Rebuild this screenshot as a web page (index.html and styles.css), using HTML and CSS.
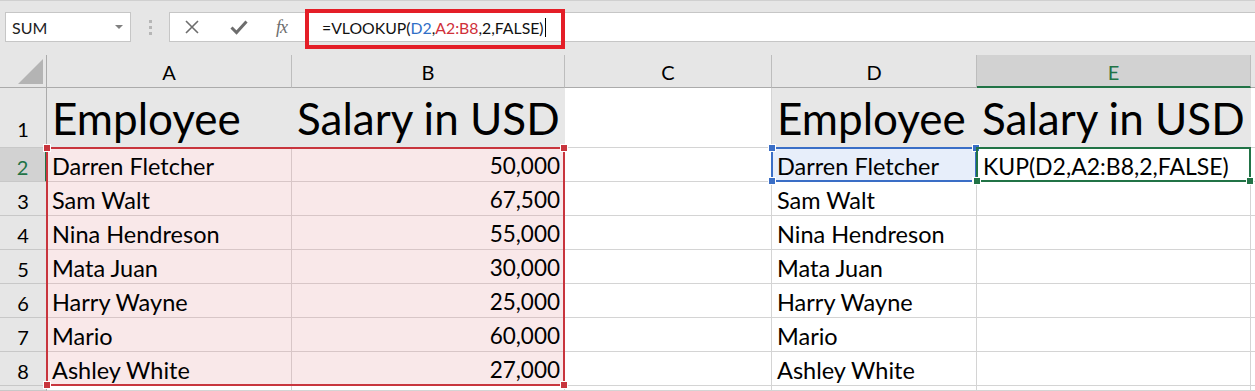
FILE: index.html
```html
<!DOCTYPE html>
<html>
<head>
<meta charset="utf-8">
<link rel="stylesheet" href="styles.css">
</head>
<body>
<div class="app">
  <div class="topstrip"></div>
  <div class="fbar">
    <div class="namebox"><span class="nb-text">SUM</span><span class="caret"></span></div>
    <div class="grip"><i></i><i></i><i></i></div>
    <div class="formula">
      <div class="fbtns">
        <svg class="ico" width="16" height="16" viewBox="0 0 16 16"><path d="M2 2 L14 14 M14 2 L2 14" stroke="#6d6d6d" stroke-width="1.6" fill="none"/></svg>
        <svg class="ico" width="18" height="16" viewBox="0 0 18 16"><path d="M1.5 8.5 L6.5 13.5 L16.5 2.5" stroke="#6d6d6d" stroke-width="3" fill="none" stroke-linejoin="miter"/></svg>
        <span class="fx">fx</span>
      </div>
      <div class="ftext">=VLOOKUP(<span class="rb">D2</span>,<span class="rr">A2:B8</span>,2,FALSE)<span class="cursor"></span></div>
    </div>
    <div class="annot"></div>
  </div>
  <div class="gap"></div>
  <div class="sheet">
    <div class="corner"><span class="tri"></span></div>
    <div class="ch">A</div>
    <div class="ch">B</div>
    <div class="ch">C</div>
    <div class="ch">D</div>
    <div class="ch ch-act">E</div>
    <div class="ch ch-last"></div>

    <div class="rh rh-big">1</div>
    <div class="c big fill">Employee</div>
    <div class="c big fill">Salary in USD</div>
    <div class="c big"></div>
    <div class="c big fill">Employee</div>
    <div class="c big fill">Salary in USD</div>
    <div class="c"></div>

    <div class="rh rh-act">2</div>
    <div class="c sel">Darren Fletcher</div>
    <div class="c sel num">50,000</div>
    <div class="c"></div>
    <div class="c blue">Darren Fletcher</div>
    <div class="c edit">KUP(D2,A2:B8,2,FALSE)</div>
    <div class="c"></div>

    <div class="rh">3</div>
    <div class="c sel">Sam Walt</div>
    <div class="c sel num">67,500</div>
    <div class="c"></div>
    <div class="c">Sam Walt</div>
    <div class="c"></div>
    <div class="c"></div>

    <div class="rh">4</div>
    <div class="c sel">Nina Hendreson</div>
    <div class="c sel num">55,000</div>
    <div class="c"></div>
    <div class="c">Nina Hendreson</div>
    <div class="c"></div>
    <div class="c"></div>

    <div class="rh">5</div>
    <div class="c sel">Mata Juan</div>
    <div class="c sel num">30,000</div>
    <div class="c"></div>
    <div class="c">Mata Juan</div>
    <div class="c"></div>
    <div class="c"></div>

    <div class="rh">6</div>
    <div class="c sel">Harry Wayne</div>
    <div class="c sel num">25,000</div>
    <div class="c"></div>
    <div class="c">Harry Wayne</div>
    <div class="c"></div>
    <div class="c"></div>

    <div class="rh">7</div>
    <div class="c sel">Mario</div>
    <div class="c sel num">60,000</div>
    <div class="c"></div>
    <div class="c">Mario</div>
    <div class="c"></div>
    <div class="c"></div>

    <div class="rh">8</div>
    <div class="c sel">Ashley White</div>
    <div class="c sel num">27,000</div>
    <div class="c"></div>
    <div class="c">Ashley White</div>
    <div class="c"></div>
    <div class="c"></div>

    <div class="rh"></div>
    <div class="c"></div>
    <div class="c"></div>
    <div class="c"></div>
    <div class="c"></div>
    <div class="c"></div>
    <div class="c"></div>

    <div class="overlay">
      <div class="range-red"><i class="h tl"></i><i class="h tr"></i><i class="h bl"></i><i class="h br"></i></div>
      <div class="range-blue"><i class="h tl"></i><i class="h tr"></i><i class="h bl"></i><i class="h br"></i></div>
      <div class="range-green"><i class="h bl"></i><i class="h br"></i></div>
    </div>
  </div>
</div>
</body>
</html>
```

FILE: styles.css
```css
html, body {
  margin: 0;
  padding: 0;
  background: #e6e6e6;
}
.app {
  width: 1255px;
  height: 391px;
  overflow: hidden;
  background: #e6e6e6;
  font-family: Lato, "Liberation Sans", sans-serif;
}
.topstrip {
  height: 12px;
  border-top: 1px solid #d0d0d0;
  box-sizing: border-box;
}
.fbar {
  position: relative;
  display: flex;
  height: 30px;
  box-sizing: border-box;
}
.namebox {
  margin-left: 5px;
  width: 126px;
  box-sizing: border-box;
  background: #fff;
  border: 1px solid #c6c6c6;
  display: flex;
  align-items: center;
  justify-content: space-between;
  padding: 0 7px 0 6px;
}
.nb-text {
  font-size: 16px;
  color: #222;
}
.caret {
  width: 0;
  height: 0;
  border-left: 4px solid transparent;
  border-right: 4px solid transparent;
  border-top: 4px solid #808080;
}
.grip {
  width: 38px;
  display: flex;
  flex-direction: column;
  align-items: center;
  justify-content: center;
  gap: 3px;
}
.grip i {
  display: block;
  width: 3px;
  height: 3px;
  background: #b6b6b6;
}
.formula {
  flex: 1;
  display: flex;
  align-items: center;
  background: #fff;
  border: 1px solid #c6c6c6;
  border-right: none;
}
.fbtns {
  display: flex;
  align-items: center;
  padding-left: 14px;
  width: 139px;
  box-sizing: border-box;
}
.ico {
  display: block;
}
.fbtns .ico:first-child {
  margin-right: 30px;
}
.fbtns .ico:nth-child(2) {
  margin-right: 28px;
}
.fx {
  font-family: "Liberation Serif", serif;
  font-style: italic;
  font-size: 18px;
  color: #6d6d6d;
  letter-spacing: -1px;
}
.ftext {
  font-size: 15.8px;
  color: #111;
  display: flex;
  align-items: center;
  white-space: nowrap;
  padding-left: 13px;
}
.rb { color: #2f6fc7; }
.rr { color: #d0303a; }
.cursor {
  display: inline-block;
  width: 1px;
  height: 19px;
  background: #000;
  margin-left: 1px;
}
.annot {
  position: absolute;
  left: 305px;
  top: -3px;
  width: 260px;
  height: 40px;
  box-sizing: border-box;
  border: 4px solid #e41e27;
  pointer-events: none;
}
.gap {
  height: 13px;
}
.sheet {
  position: relative;
  display: grid;
  grid-template-columns: 47px 245px 273px 207px 205px 274px 4px;
  grid-template-rows: 33px 60px repeat(7, 34px) 5px;
  background: #fff;
}
.overlay {
  position: absolute;
  inset: 0;
  display: grid;
  grid-template-columns: 47px 245px 273px 207px 205px 274px 4px;
  grid-template-rows: 33px 60px repeat(7, 34px) 5px;
  pointer-events: none;
}
.corner {
  background: #e6e6e6;
  border-right: 1px solid #ababab;
  border-bottom: 1px solid #ababab;
  position: relative;
}
.tri {
  position: absolute;
  left: 18px;
  top: 4px;
  width: 25px;
  height: 25px;
  background: #b4b4b4;
  clip-path: polygon(100% 0, 100% 100%, 0 100%);
}
.ch {
  background: #e6e6e6;
  border-right: 1px solid #bdbdbd;
  border-bottom: 1px solid #ababab;
  display: flex;
  align-items: center;
  justify-content: center;
  font-size: 20px;
  color: #000;
  padding-top: 2px;
  box-sizing: border-box;
}
.ch-act {
  background: #d2d2d2;
  color: #217346;
  border-bottom: 2px solid #217346;
}
.ch-last {
  border-right: none;
}
.rh {
  background: #e6e6e6;
  border-right: 1px solid #ababab;
  border-bottom: 1px solid #c8c8c8;
  display: flex;
  align-items: flex-end;
  justify-content: center;
  font-size: 20px;
  padding-bottom: 2px;
  box-sizing: border-box;
  color: #000;
}
.rh-big {
  padding-bottom: 6px;
}
.rh-act {
  background: #d2d2d2;
  color: #217346;
  border-right: 2px solid #217346;
}
.c {
  box-sizing: border-box;
  border-right: 1px solid #d4d4d4;
  border-bottom: 1px solid #d4d4d4;
  display: flex;
  align-items: flex-end;
  padding: 0 4px 1px 5px;
  font-size: 23.5px;
  color: #000;
  white-space: nowrap;
  overflow: hidden;
}
.big {
  font-size: 44px;
  padding-bottom: 3px;
}
.fill {
  background: #e7e7e7;
  border-right-color: #e7e7e7;
}
.sel {
  background: #f9e8e9;
  border-right-color: #d8c6c7;
  border-bottom-color: #d8c6c7;
}
.num {
  justify-content: flex-end;
  font-size: 22.5px;
  padding-bottom: 2px;
}
.blue {
  background: #e7eefa;
}
.edit {
  padding-left: 6px;
  font-size: 23px;
}
.range-red, .range-blue, .range-green {
  position: relative;
  box-sizing: border-box;
  margin: -1px 0 0 -1px;
}
.range-red {
  grid-row: 3 / 10;
  grid-column: 2 / 4;
  border: 2px solid #c8353d;
}
.range-blue {
  grid-row: 3 / 4;
  grid-column: 5 / 6;
  border: 2px solid #3a6ec6;
}
.range-green {
  grid-row: 3 / 4;
  grid-column: 6 / 7;
  border: 2px solid #217346;
}
.h {
  position: absolute;
  width: 6px;
  height: 6px;
  border: 1px solid #fff;
  box-sizing: content-box;
}
.range-red .h { background: #c8353d; }
.range-blue .h { background: #3a6ec6; }
.range-green .h { background: #217346; }
.h.tl { left: -5px; top: -5px; }
.h.tr { right: -5px; top: -5px; }
.h.bl { left: -5px; bottom: -5px; }
.h.br { right: -5px; bottom: -5px; }
```
